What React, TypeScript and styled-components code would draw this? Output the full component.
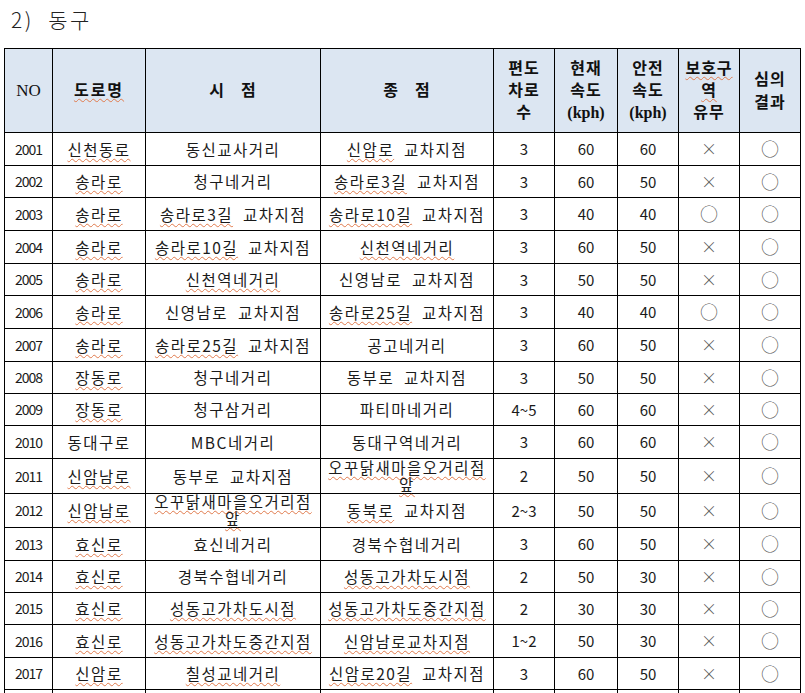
import React from "react";
import styled, { createGlobalStyle } from "styled-components";

const GlobalStyle = createGlobalStyle`
  html, body { margin: 0; padding: 0; background: #ffffff; }
  body { font-family: "Noto Sans CJK KR", "Noto Sans", sans-serif; color: #1a1a1a; }
  * { box-sizing: border-box; }
`;

const COLS = "48px 93px 175px 173px 61px 63px 61px 61px 61px";

type Kind = "no" | "text" | "num" | "x" | "o";

const sizes: Record<Kind, string> = {
  no: "14px",
  text: "15.5px",
  num: "15px",
  x: "16px",
  o: "18px",
};

const Page = styled.div`
  width: 805px;
  padding-top: 4px;
`;

const Title = styled.h2`
  margin: 0 0 14px 11px;
  font-size: 21px;
  line-height: 30px;
  font-weight: 300;
  letter-spacing: 2.5px;
  color: #222;
  white-space: pre;
`;

const Table = styled.div`
  margin-left: 4px;
  width: 797px;
  border-left: 1px solid #000;
  border-top: 1px solid #000;
`;

const Row = styled.div<{ $h: number }>`
  display: grid;
  grid-template-columns: ${COLS};
  height: ${(p) => p.$h}px;
`;

const Cell = styled.div<{ $kind?: Kind }>`
  border-right: 1px solid #000;
  border-bottom: 1px solid #000;
  display: flex;
  align-items: center;
  justify-content: center;
  text-align: center;
  white-space: pre;
  font-size: ${(p) => sizes[p.$kind ?? "text"]};
  letter-spacing: ${(p) => (p.$kind === "no" ? "-1px" : p.$kind === "text" ? "1.5px" : "0")};
  color: ${(p) => (p.$kind === "x" || p.$kind === "o" ? "#555" : "#1a1a1a")};
  font-weight: ${(p) => (p.$kind === "x" || p.$kind === "o" ? 300 : 400)};
  line-height: 1.2;
`;

const TwoLine = styled.span`
  display: block;
  line-height: 17px;
  margin-top: -1px;
`;

const HeadCell = styled.div<{ $lh?: number }>`
  border-right: 1px solid #000;
  border-bottom: 1px solid #000;
  background: #dce6f2;
  display: flex;
  flex-direction: column;
  align-items: center;
  justify-content: center;
  text-align: center;
  font-family: "Liberation Serif", "Noto Sans CJK KR", serif;
  font-weight: 700;
  font-size: 16px;
  letter-spacing: 1px;
  line-height: ${(p) => p.$lh ?? 22}px;
  color: #111;
`;

const HeadNo = styled.span`
  font-family: "Liberation Serif", serif;
  font-weight: 400;
  font-size: 17px;
  letter-spacing: 0;
`;

const Kph = styled.span`
  font-family: "Liberation Serif", serif;
  font-weight: 700;
  font-size: 16px;
  letter-spacing: 0;
`;

const Spaced = styled.span<{ $gap: number }>`
  display: flex;
  gap: ${(p) => p.$gap}px;
`;

const Spell = styled.span`
  text-decoration: underline wavy #e07a4c;
  text-decoration-thickness: 1px;
  text-underline-offset: 2px;
  text-decoration-skip-ink: none;
`;

function rich(s: string): React.ReactNode {
  const parts = s.split("~");
  return parts.map((p, i) => {
    if (!p) return null;
    const lines = p.split("/");
    const content = lines.map((l, j) => (
      <React.Fragment key={j}>
        {j > 0 && <br />}
        {l}
      </React.Fragment>
    ));
    return i % 2 === 1 ? <Spell key={i}>{content}</Spell> : <React.Fragment key={i}>{content}</React.Fragment>;
  });
}

type R = [string, string, string, string, string, string, string, string, string, number];

const rows: R[] = [
  ["2001", "~신천동로~", "동신교사거리", "~신암로~  교차지점", "3", "60", "60", "×", 33],
  ["2002", "~송라로~", "청구네거리", "~송라로3길~  교차지점", "3", "60", "50", "×", 32],
  ["2003", "~송라로~", "~송라로3길~  교차지점", "~송라로10길~  교차지점", "3", "40", "40", "○", 33],
  ["2004", "~송라로~", "~송라로10길~  교차지점", "~신천역네거리~", "3", "60", "50", "×", 33],
  ["2005", "~송라로~", "~신천역네거리~", "신영남로  교차지점", "3", "50", "50", "×", 32],
  ["2006", "~송라로~", "신영남로  교차지점", "~송라로25길~  교차지점", "3", "40", "40", "○", 33],
  ["2007", "~송라로~", "~송라로25길~  교차지점", "공고네거리", "3", "60", "50", "×", 33],
  ["2008", "~장동로~", "청구네거리", "동부로  교차지점", "3", "50", "50", "×", 32],
  ["2009", "~장동로~", "청구삼거리", "파티마네거리", "4~5", "60", "60", "×", 32],
  ["2010", "동대구로", "MBC네거리", "동대구역네거리", "3", "60", "60", "×", 33],
  ["2011", "~신암남로~", "동부로  교차지점", "~오꾸닭새마을오거리점/앞~", "2", "50", "50", "×", 35],
  ["2012", "~신암남로~", "~오꾸닭새마을오거리점/앞~", "~동북로~  교차지점", "2~3", "50", "50", "×", 34],
  ["2013", "~효신로~", "효신네거리", "경북수협네거리", "3", "60", "50", "×", 33],
  ["2014", "~효신로~", "경북수협네거리", "~성동고가차도시점~", "2", "50", "30", "×", 32],
  ["2015", "~효신로~", "~성동고가차도시점~", "~성동고가차도중간지점~", "2", "30", "30", "×", 32],
  ["2016", "~효신로~", "~성동고가차도중간지점~", "~신암남로교차지점~", "1~2", "50", "30", "×", 33],
  ["2017", "~신암로~", "~칠성교네거리~", "~신암로20길~  교차지점", "3", "60", "50", "×", 32],
].map((r) => [r[0], r[1], r[2], r[3], r[4], r[5], r[6], r[7], "○", r[8]] as R);

const markKind = (m: string): Kind => (m === "○" ? "o" : "x");

function textCell(s: string, key: number) {
  const two = s.includes("/");
  return (
    <Cell key={key} $kind="text">
      {two ? <TwoLine>{rich(s)}</TwoLine> : rich(s)}
    </Cell>
  );
}

export default function App() {
  return (
    <>
      <GlobalStyle />
      <Page>
        <Title>2)  동구</Title>
        <Table>
          <Row $h={84}>
            <HeadCell>
              <HeadNo>NO</HeadNo>
            </HeadCell>
            <HeadCell>
              <Spell style={{ letterSpacing: "2px" }}>도로명</Spell>
            </HeadCell>
            <HeadCell>
              <Spaced $gap={16}>
                <span>시</span>
                <span>점</span>
              </Spaced>
            </HeadCell>
            <HeadCell>
              <Spaced $gap={16}>
                <span>종</span>
                <span>점</span>
              </Spaced>
            </HeadCell>
            <HeadCell $lh={22}>
              <span>편도</span>
              <span>차로</span>
              <span>수</span>
            </HeadCell>
            <HeadCell $lh={22}>
              <span>현재</span>
              <span>속도</span>
              <Kph>(kph)</Kph>
            </HeadCell>
            <HeadCell $lh={22}>
              <span>안전</span>
              <span>속도</span>
              <Kph>(kph)</Kph>
            </HeadCell>
            <HeadCell $lh={22}>
              <Spell>보호구</Spell>
              <Spell>역</Spell>
              <span>유무</span>
            </HeadCell>
            <HeadCell $lh={23}>
              <span>심의</span>
              <span>결과</span>
            </HeadCell>
          </Row>
          {rows.map((r) => (
            <Row key={r[0]} $h={r[9]}>
              <Cell $kind="no">{r[0]}</Cell>
              {textCell(r[1], 1)}
              {textCell(r[2], 2)}
              {textCell(r[3], 3)}
              <Cell $kind="num">{r[4]}</Cell>
              <Cell $kind="num">{r[5]}</Cell>
              <Cell $kind="num">{r[6]}</Cell>
              <Cell $kind={markKind(r[7])}>{r[7]}</Cell>
              <Cell $kind={markKind(r[8])}>{r[8]}</Cell>
            </Row>
          ))}
          <Row $h={33}>
            {Array.from({ length: 9 }).map((_, i) => (
              <Cell key={i} />
            ))}
          </Row>
        </Table>
      </Page>
    </>
  );
}
